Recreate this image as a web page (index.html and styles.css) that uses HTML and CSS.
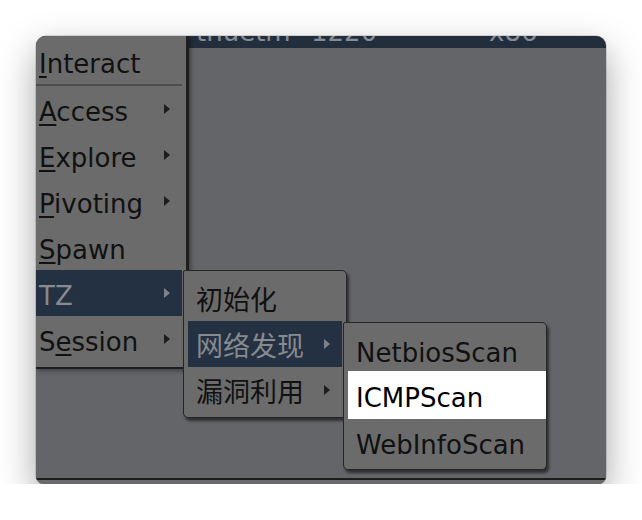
FILE: index.html
```html
<!DOCTYPE html>
<html>
<head>
<meta charset="utf-8">
<link rel="stylesheet" href="styles.css">
</head>
<body>
<div class="window">
  <div class="header">
    <div class="header-row">
      <span class="col col-user">thuetm</span>
      <span class="col col-pid">1220</span>
      <span class="col col-arch">x86</span>
    </div>
  </div>
  <div class="content"></div>
  <div class="footer"></div>

  <div class="menu main-menu">
    <div class="item"><span><u>I</u>nteract</span></div>
    <div class="sep"></div>
    <div class="item"><span><u>A</u>ccess</span><i class="arrow"></i></div>
    <div class="item"><span><u>E</u>xplore</span><i class="arrow"></i></div>
    <div class="item"><span><u>P</u>ivoting</span><i class="arrow"></i></div>
    <div class="item"><span><u>S</u>pawn</span></div>
    <div class="item active"><span>TZ</span><i class="arrow"></i></div>
    <div class="item"><span>S<u>e</u>ssion</span><i class="arrow"></i></div>
  </div>

  <div class="menu sub sub1">
    <div class="item cjk"><span>初始化</span></div>
    <div class="item cjk active"><span>网络发现</span><i class="arrow"></i></div>
    <div class="item cjk"><span>漏洞利用</span><i class="arrow"></i></div>
  </div>

  <div class="menu sub sub2">
    <div class="item"><span>NetbiosScan</span></div>
    <div class="item selected"><span>ICMPScan</span></div>
    <div class="item"><span>WebInfoScan</span></div>
  </div>
</div>
</body>
</html>
```

FILE: styles.css
```css
html, body {
  margin: 0;
  padding: 0;
  background: #ffffff;
}
body {
  padding: 36px 0 0 36px;
  font-family: "DejaVu Sans", "Noto Sans CJK SC", sans-serif;
}
.window {
  position: relative;
  width: 570px;
  height: 448px;
  border-radius: 10px 10px 8px 8px;
  overflow: hidden;
  background: #646569;
  display: flex;
  flex-direction: column;
  box-shadow: 0 14px 36px rgba(0,0,0,0.36), 0 0 0 0.5px rgba(0,0,0,0.25);
}
.header {
  height: 12px;
  background: #232e3c;
  overflow: hidden;
  flex: none;
}
.header-row {
  display: flex;
  margin-top: -19px;
  font-size: 26px;
  line-height: 30px;
  color: #868c95;
  white-space: nowrap;
}
.col-user { margin-left: 160px; width: 115px; }
.col-pid { width: 178px; }
.content {
  flex: 1;
  background: #646569;
}
.footer {
  flex: none;
  height: 4px;
  border-top: 2px solid #1c1c1d;
  background: #6a6a6d;
}
.menu {
  position: absolute;
  background: #6b6b6b;
  color: #111;
  font-size: 26px;
}
.item {
  height: 46px;
  display: flex;
  align-items: center;
  justify-content: space-between;
  white-space: nowrap;
}
.item > span {
  padding-top: 5px;
}
.item.cjk > span {
  padding-top: 0;
}
.item u {
  text-decoration: underline;
  text-decoration-thickness: 2px;
  text-underline-offset: 3px;
}
.arrow {
  width: 0;
  height: 0;
  border-top: 5px solid transparent;
  border-bottom: 5px solid transparent;
  border-left: 6px solid #1d1d1d;
  margin-right: 12px;
}
.item.active {
  background: #243142;
  color: #878a8f;
}
.item.active .arrow {
  border-left-color: #7d8189;
}
.main-menu {
  left: 0;
  top: 0;
  width: 146px;
  padding: 2px 4px 5px 0;
  border-right: 3px solid #1e1e1e;
  border-bottom: 2px solid #1e1e1e;
  box-shadow: 2px 2px 4px rgba(0,0,0,0.35);
}
.main-menu .item {
  padding-left: 3px;
}
.sep {
  height: 2px;
  background: #4d4d4d;
}
.sub {
  border: 1px solid #262626;
  border-radius: 2px 5px 5px 5px;
  padding: 4px;
  box-shadow: 2px 3px 3px rgba(0,0,0,0.55);
}
.sub .item {
  padding-left: 8px;
}
.sub1 {
  left: 147px;
  top: 234px;
  width: 154px;
}
.cjk {
  font-family: "Noto Sans CJK SC", sans-serif;
  font-size: 27px;
}
.sub2 {
  left: 307px;
  top: 286px;
  width: 194px;
}
.item.selected {
  background: #ffffff;
  color: #000;
  margin: -2px -4px 0 0;
  height: 48px;
}
```
